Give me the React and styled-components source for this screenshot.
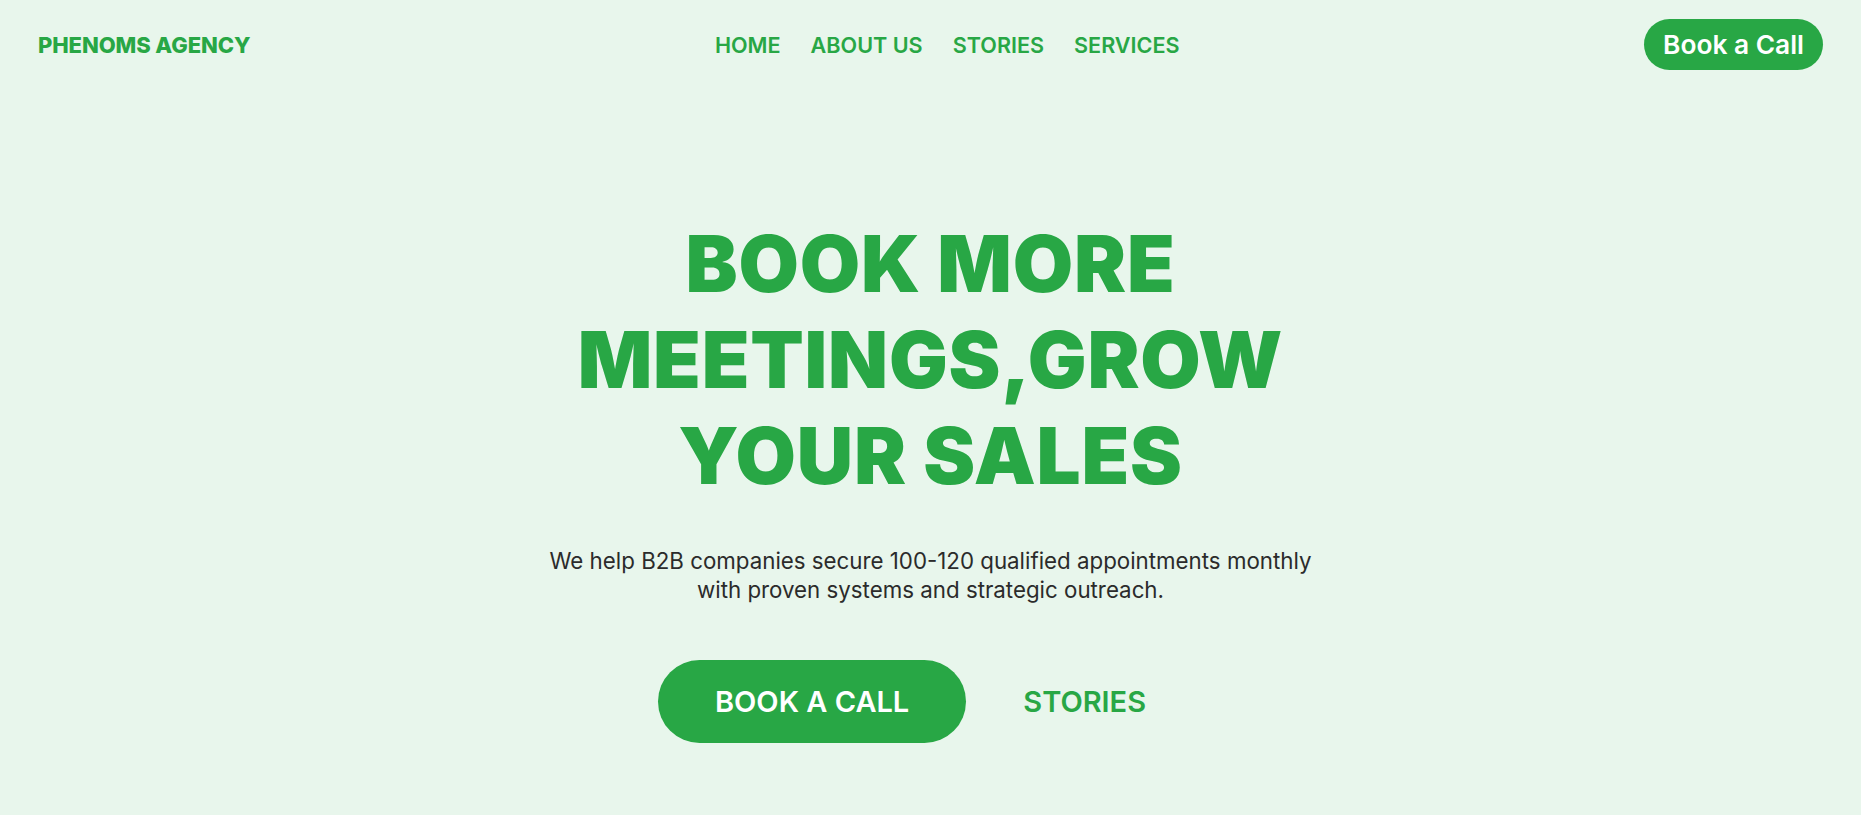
import React from "react";
import styled, { createGlobalStyle } from "styled-components";

const GREEN = "#28a745";

const GlobalStyle = createGlobalStyle`
  html, body {
    margin: 0;
    padding: 0;
    background: #e8f6ec;
  }
  body {
    font-family: Inter, "Noto Sans", sans-serif;
    color: #2b2b2b;
  }
  * {
    box-sizing: border-box;
  }
`;

// =========================================================
const Page = styled.div`
  width: 100%;
  min-height: 100vh;
  background: #e8f6ec;
`;

const Header = styled.header`
  display: flex;
  align-items: center;
  justify-content: space-between;
  padding: 19px 38px;
`;

const Logo = styled.div`
  font-family: Inter, sans-serif;
  font-weight: 800;
  font-size: 22px;
  color: ${GREEN};
  letter-spacing: -0.1px;
`;

const Nav = styled.nav`
  display: flex;
  gap: 30px;
`;

const NavLink = styled.a`
  font-family: Inter, sans-serif;
  font-weight: 600;
  font-size: 21.6px;
  color: ${GREEN};
  text-decoration: none;
  cursor: pointer;
`;

const HeaderButton = styled.button`
  font-family: Inter, sans-serif;
  font-weight: 600;
  font-size: 26.3px;
  color: #fff;
  background: ${GREEN};
  border: none;
  border-radius: 26px;
  height: 51px;
  padding: 0 19px;
  cursor: pointer;
`;

// =========================================================
const Hero = styled.main`
  display: flex;
  flex-direction: column;
  align-items: center;
  text-align: center;
  padding-top: 127px;
`;

const Title = styled.h1`
  margin: 0;
  font-family: Inter, sans-serif;
  font-weight: 900;
  font-size: 78px;
  line-height: 96px;
  letter-spacing: 0.8px;
  color: ${GREEN};
`;

const Lead = styled.p`
  margin: 42px 0 0;
  font-size: 22.3px;
  line-height: 29px;
  color: #2b2b2b;
`;

const Actions = styled.div`
  display: flex;
  align-items: center;
  margin-top: 56px;
`;

const CtaButton = styled.button`
  font-family: Inter, sans-serif;
  font-weight: 600;
  font-size: 29px;
  height: 83px;
  padding: 0 57px;
  border: none;
  border-radius: 42px;
  cursor: pointer;
  color: ${(p) => (p.$ghost ? GREEN : "#fff")};
  background: ${(p) => (p.$ghost ? "transparent" : GREEN)};
`;

function App() {
  return (
    <Page>
      <GlobalStyle />
      <Header>
        <Logo>PHENOMS AGENCY</Logo>
        <Nav>
          <NavLink>HOME</NavLink>
          <NavLink>ABOUT US</NavLink>
          <NavLink>STORIES</NavLink>
          <NavLink>SERVICES</NavLink>
        </Nav>
        <HeaderButton>Book a Call</HeaderButton>
      </Header>
      <Hero>
        <Title>
          BOOK MORE
          <br />
          MEETINGS,GROW
          <br />
          YOUR SALES
        </Title>
        <Lead>
          We help B2B companies secure 100-120 qualified appointments monthly
          <br />
          with proven systems and strategic outreach.
        </Lead>
        <Actions>
          <CtaButton>BOOK A CALL</CtaButton>
          <CtaButton $ghost>STORIES</CtaButton>
        </Actions>
      </Hero>
    </Page>
  );
}

export default App;
